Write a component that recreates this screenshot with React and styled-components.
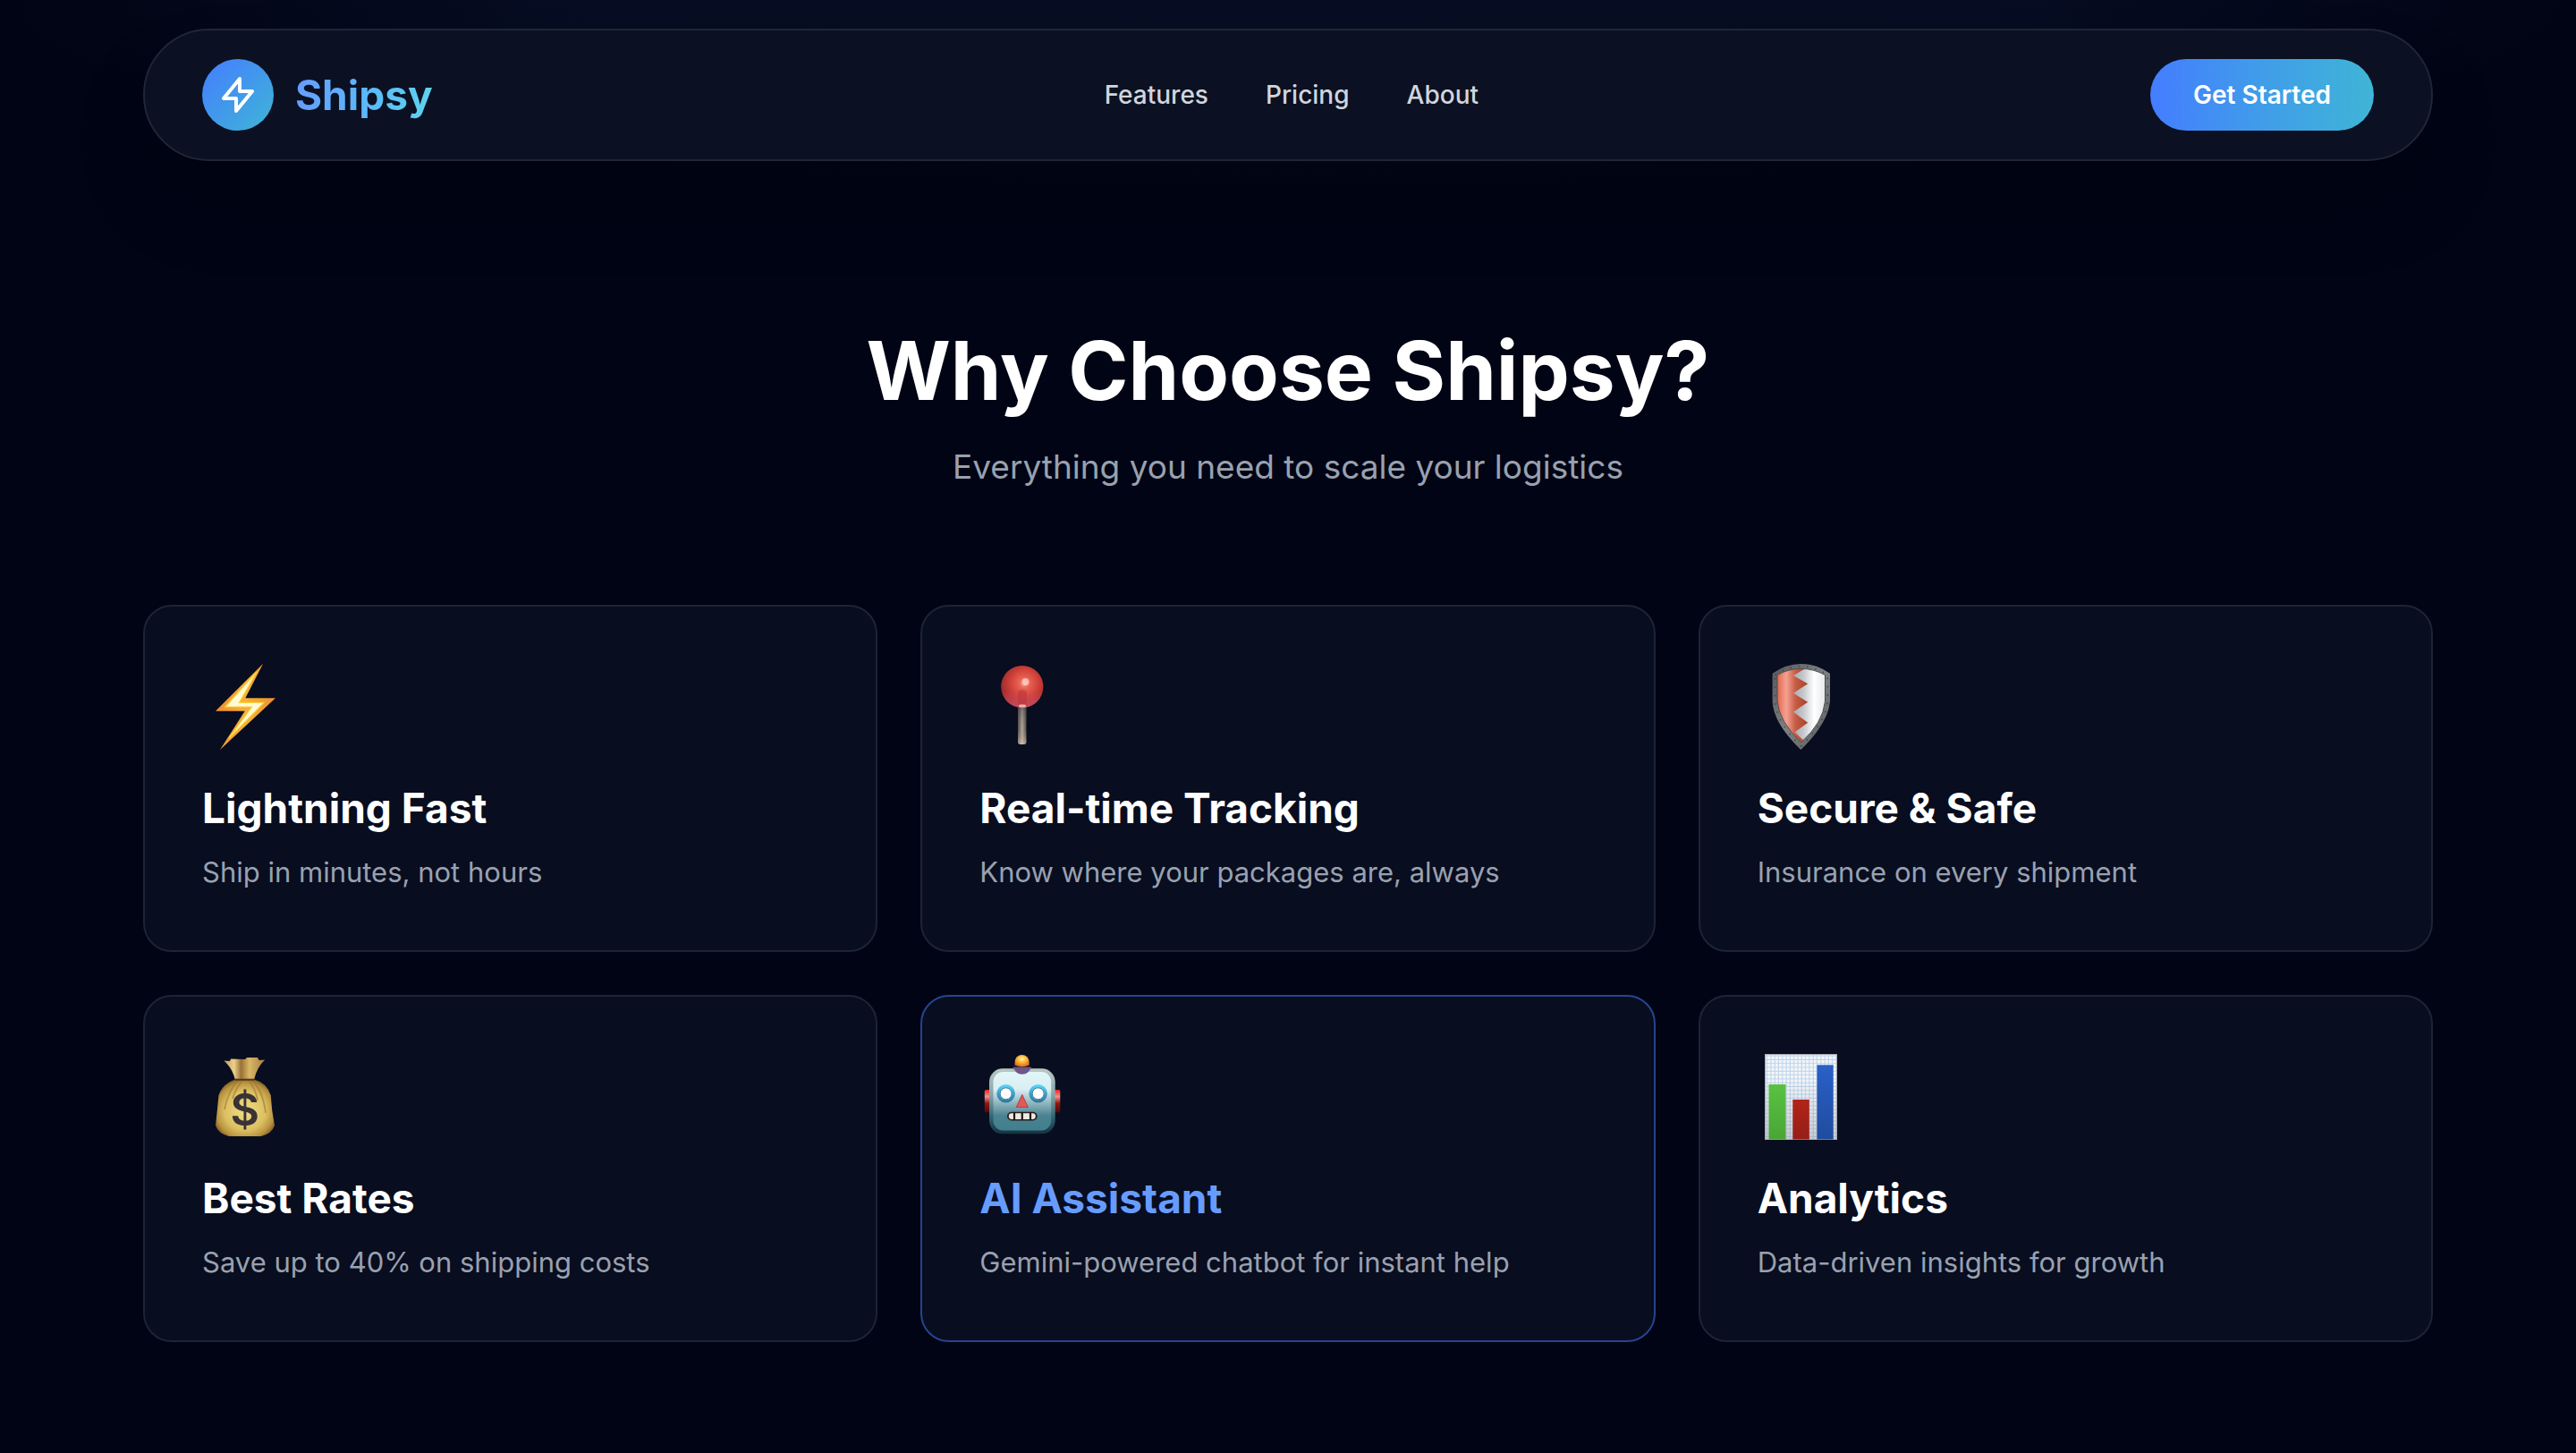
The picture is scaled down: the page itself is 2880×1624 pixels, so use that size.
import React from 'react';
import styled, { createGlobalStyle } from 'styled-components';

const GlobalStyle = createGlobalStyle`
  *, *::before, *::after { box-sizing: border-box; }
  body {
    margin: 0;
    background: #010414;
    color: #ffffff;
    font-family: Inter, "Liberation Sans", sans-serif;
    -webkit-font-smoothing: antialiased;
  }
  h1, h2, h3, p, ul { margin: 0; padding: 0; }
`;

const Page = styled.div`
  min-height: 100vh;
  padding: 32px 48px 124px;
  background: radial-gradient(ellipse 1420px 210px at 50% 0, #070d23 0%, #060c21 60%, #010414 100%) no-repeat #010414;
`;

const Container = styled.div`
  max-width: 2560px;
  margin: 0 auto;
`;

const NavBar = styled.header`
  display: flex;
  align-items: center;
  justify-content: space-between;
  padding: 32px 64px;
  border: 2px solid #1e2637;
  border-radius: 74px;
  background: #0b1122;
  box-shadow: 0 50px 100px -24px rgba(0, 0, 0, 0.25);
`;

const Brand = styled.a`
  display: flex;
  align-items: center;
  gap: 24px;
  text-decoration: none;
`;

const BrandMark = styled.span`
  display: flex;
  align-items: center;
  justify-content: center;
  width: 80px;
  height: 80px;
  border-radius: 50%;
  background: linear-gradient(135deg, #447dff, #3fb5d6);
`;

const BrandName = styled.span`
  font-size: 46px;
  line-height: 64px;
  font-weight: 700;
  color: transparent;
  background: linear-gradient(90deg, #679cff, #5bb8fa 50%, #5fd3ee);
  background-clip: text;
  -webkit-background-clip: text;
`;

const NavLinks = styled.nav`
  display: flex;
  gap: 64px;
`;

const NavLink = styled.a`
  font-size: 28px;
  line-height: 40px;
  font-weight: 500;
  color: #d1d5dc;
  text-decoration: none;
`;

const CtaButton = styled.button`
  padding: 20px 48px;
  border: 0;
  border-radius: 40px;
  background: linear-gradient(90deg, #447dff, #409de9 50%, #3fb5d6);
  color: #ffffff;
  font: 600 28px/40px Inter, "Liberation Sans", sans-serif;
  cursor: pointer;
`;

const SectionHead = styled.div`
  display: flex;
  flex-direction: column;
  align-items: center;
  gap: 32px;
  padding: 186px 0 126px;
  text-align: center;
`;

const Heading = styled.h2`
  font-size: 91px;
  line-height: 96px;
  font-weight: 700;
`;

const Subheading = styled.p`
  font-size: 37px;
  line-height: 56px;
  color: #99a1af;
`;

const CardGrid = styled.div`
  display: grid;
  grid-template-columns: repeat(3, minmax(0, 1fr));
  gap: 48px;
`;

const Card = styled.article`
  padding: 64px 64px 63px;
  border: 2px solid ${(p) => (p.$accent ? '#26458f' : '#1c2435')};
  border-radius: 32px;
  background: #080d1f;
`;

const Pictogram = styled.svg`
  display: block;
  width: 96px;
  height: 96px;
  margin-bottom: 33px;
`;

const CardTitle = styled.h3`
  margin-bottom: 16px;
  font-size: 46px;
  line-height: 64px;
  font-weight: 700;
  color: ${(p) => (p.$accent ? '#679cff' : '#ffffff')};
`;

const CardText = styled.p`
  font-size: 31px;
  line-height: 48px;
  color: #99a1af;
`;

const Bolt = () => (
  <Pictogram viewBox="0 0 96 96" aria-hidden="true">
    <defs>
      <linearGradient id="bolt" x1="0" y1="0" x2="1" y2="0">
        <stop offset="0" stopColor="#ee8f2f" />
        <stop offset=".5" stopColor="#f5b03a" />
        <stop offset="1" stopColor="#ee8f2f" />
      </linearGradient>
    </defs>
    <path d="M68 0 48.300 38.300H82L20 96 47.700 52.700H15Z" fill="url(#bolt)" />
    <path d="M61 9 41.300 43.300H69L30 83 55.700 48H26Z" fill="#fffbd6" stroke="#fbd63f" strokeWidth="1.200" />
  </Pictogram>
);

const Pin = () => (
  <Pictogram viewBox="0 0 96 96" aria-hidden="true">
    <defs>
      <radialGradient id="pinBall" cx=".55" cy=".42" r=".6">
        <stop offset="0" stopColor="#f9a596" />
        <stop offset=".2" stopColor="#ea6453" />
        <stop offset=".55" stopColor="#d0413a" />
        <stop offset="1" stopColor="#962629" />
      </radialGradient>
      <linearGradient id="pinLow" x1="0" y1="0" x2="0" y2="1">
        <stop offset=".6" stopColor="#e0566a" stopOpacity="0" />
        <stop offset="1" stopColor="#d9627c" stopOpacity=".7" />
      </linearGradient>
      <linearGradient id="pinRod" x1="0" y1="0" x2="1" y2="0">
        <stop offset="0" stopColor="#4b4643" />
        <stop offset=".5" stopColor="#b5aba0" />
        <stop offset="1" stopColor="#4b4643" />
      </linearGradient>
      <linearGradient id="pinRodLow" x1="0" y1="0" x2="0" y2="1">
        <stop offset="0" stopColor="#2c2c33" stopOpacity=".5" />
        <stop offset=".6" stopColor="#8a7c6e" stopOpacity=".1" />
        <stop offset="1" stopColor="#e4cdb4" stopOpacity=".6" />
      </linearGradient>
    </defs>
    <rect x="43" y="46" width="9.500" height="44" rx="3" fill="url(#pinRod)" />
    <rect x="43" y="46" width="9.500" height="44" rx="3" fill="url(#pinRodLow)" />
    <circle cx="47.800" cy="25.500" r="23.600" fill="url(#pinBall)" />
    <circle cx="47.800" cy="25.500" r="23.600" fill="url(#pinLow)" />
    <path d="M43 31q5-4 10 0v15H43Z" fill="#b8343a" opacity=".55" />
    <rect x="44" y="45.500" width="8" height="3" rx="1.500" fill="#f5b3b0" />
    <circle cx="51.500" cy="20" r="4" fill="#ffd9d0" opacity=".7" />
  </Pictogram>
);

const Shield = () => (
  <Pictogram viewBox="0 0 96 96" aria-hidden="true">
    <defs>
      <linearGradient id="rim" x1="0" y1="0" x2="1" y2="1">
        <stop offset="0" stopColor="#55595b" />
        <stop offset=".5" stopColor="#7d8182" />
        <stop offset="1" stopColor="#55595b" />
      </linearGradient>
      <linearGradient id="silver" gradientUnits="userSpaceOnUse" x1="40" y1="0" x2="76" y2="0">
        <stop offset="0" stopColor="#a9acb1" />
        <stop offset=".3" stopColor="#c3c6ca" />
        <stop offset=".65" stopColor="#ffffff" />
        <stop offset="1" stopColor="#e3e6ec" />
      </linearGradient>
      <linearGradient id="red" gradientUnits="userSpaceOnUse" x1="22" y1="0" x2="56" y2="0">
        <stop offset="0" stopColor="#e4684e" />
        <stop offset=".3" stopColor="#f4a192" />
        <stop offset=".6" stopColor="#c65c45" />
        <stop offset="1" stopColor="#a5432c" />
      </linearGradient>
      <clipPath id="face">
        <path d="M22 12.500Q34 5.500 48.500 5.300 63 5.500 75.500 12.500V42Q73 66 48.500 88 24 64 22 42Z" />
      </clipPath>
    </defs>
    <path d="M16.600 10.700Q32 0 48.500 0 66 0 81 10.700V42Q79 66 48.300 96 17.500 66 16.600 42Z" fill="url(#rim)" />
    <g clipPath="url(#face)">
      <rect x="16" width="70" height="96" fill="url(#silver)" />
      <path d="M16 0H58L52 6 40 13 56.200 22.300 40 32.700 56.200 42.700 40 53.700 56.200 65.700 41.700 76.300 51 85.300V96H16Z" fill="url(#red)" />
    </g>
    <path d="M22 12.500Q34 5.500 48.500 5.300 63 5.500 75.500 12.500V42Q73 66 48.500 88 24 64 22 42Z" fill="none" stroke="#4c4a4b" strokeWidth="1" />
    <path d="M19.500 12.500Q34 3 48.500 2.800 64 3 78.300 12.500V42Q76 65 48.400 92 21 65 19.500 42Z" fill="none" stroke="#3b3f41" strokeWidth="1.400" strokeDasharray="1.400 8" />
  </Pictogram>
);

const MoneyBag = () => (
  <Pictogram viewBox="0 0 96 96" aria-hidden="true">
    <defs>
      <radialGradient id="bag" cx=".5" cy=".55" r=".58">
        <stop offset="0" stopColor="#f2de85" />
        <stop offset=".6" stopColor="#dcc062" />
        <stop offset=".85" stopColor="#b8923f" />
        <stop offset="1" stopColor="#7c5a26" />
      </radialGradient>
      <linearGradient id="bagTop" x1="0" y1="0" x2="1" y2="0">
        <stop offset="0" stopColor="#c09a5c" />
        <stop offset=".25" stopColor="#ecd08a" />
        <stop offset=".42" stopColor="#9b7136" />
        <stop offset=".62" stopColor="#d9b767" />
        <stop offset="1" stopColor="#a67c42" />
      </linearGradient>
    </defs>
    <path d="M24.300 7.500 31 8 32 5.500 48 6 50 4H62L63.500 7 70.200 6.500Q61 15 58 29H37Q34 16 24.300 7.500Z" fill="url(#bagTop)" />
    <path d="M37 28.500H58Q72 32 76.700 46 77.500 62 81 80 78 89 66 92H30Q18 89 15 80 17 62 18.500 46 23 33 37 28.500Z" fill="url(#bag)" />
    <path d="M39 31Q29 42 25 62M44 31Q37 40 34 50M53 31Q60 40 62 52M57 31Q68 42 71 66" fill="none" stroke="#a37a33" strokeWidth="1.800" opacity=".65" />
    <path d="M36.500 28.700H58.500" stroke="#4f351d" strokeWidth="2" />
    <text x="47.800" y="80" textAnchor="middle" fontFamily="Inter, sans-serif" fontSize="50" fontWeight="600" fill="#3a3336">$</text>
  </Pictogram>
);

const Robot = () => (
  <Pictogram viewBox="0 0 96 96" aria-hidden="true">
    <defs>
      <linearGradient id="shell" x1="0" y1="0" x2="0" y2="1">
        <stop offset="0" stopColor="#b9c8c4" />
        <stop offset=".4" stopColor="#86a5a9" />
        <stop offset=".75" stopColor="#2f6270" />
        <stop offset="1" stopColor="#15333f" />
      </linearGradient>
      <linearGradient id="plate" x1="0" y1="0" x2="0" y2="1">
        <stop offset="0" stopColor="#e2f6f8" />
        <stop offset=".3" stopColor="#d9eef2" />
        <stop offset=".75" stopColor="#4a8291" />
        <stop offset="1" stopColor="#417f8e" />
      </linearGradient>
      <linearGradient id="ear" x1="0" y1="0" x2="0" y2="1">
        <stop offset="0" stopColor="#e8241a" />
        <stop offset=".3" stopColor="#f0938c" />
        <stop offset=".6" stopColor="#8f1712" />
        <stop offset="1" stopColor="#4f0b0b" />
      </linearGradient>
      <radialGradient id="lamp" cx=".5" cy=".35" r=".6">
        <stop offset="0" stopColor="#fff2a0" />
        <stop offset=".5" stopColor="#fbb83a" />
        <stop offset="1" stopColor="#e3731d" />
      </radialGradient>
      <linearGradient id="ring" x1="0" y1="0" x2="0" y2="1">
        <stop offset="0" stopColor="#57d3f5" />
        <stop offset=".5" stopColor="#3aa0c8" />
        <stop offset="1" stopColor="#2e7b9c" />
      </linearGradient>
    </defs>
    <rect x="5.800" y="40" width="8" height="25.300" rx="1.500" fill="url(#ear)" />
    <rect x="82.300" y="40" width="8" height="25.300" rx="1.500" fill="url(#ear)" />
    <rect x="11" y="16.300" width="73.700" height="73" rx="15" fill="url(#shell)" />
    <rect x="15.500" y="20" width="64.700" height="65.500" rx="11" fill="url(#plate)" />
    <path d="M37.400 14.500H58.200Q55 22.700 47.800 22.700 40.500 22.700 37.400 14.500Z" fill="#6f5689" />
    <path d="M39.600 9a8 8 0 0 1 16 0V12.500Q47.600 16 39.600 12.500Z" fill="url(#lamp)" />
    <circle cx="29.600" cy="44.300" r="8.600" fill="#f4fbfd" stroke="url(#ring)" strokeWidth="3.400" />
    <circle cx="65.600" cy="44.300" r="8.600" fill="#f4fbfd" stroke="url(#ring)" strokeWidth="3.400" />
    <circle cx="29.600" cy="44.300" r="6.500" fill="#ffffff" stroke="#2c6f93" strokeWidth="1" />
    <circle cx="65.600" cy="44.300" r="6.500" fill="#ffffff" stroke="#2c6f93" strokeWidth="1" />
    <path d="M47.800 45.500 54.300 59.500H41.200Z" fill="#df5a58" stroke="#b63f40" strokeWidth="1" strokeLinejoin="round" />
    <rect x="31" y="64.700" width="33.700" height="9.800" rx="4.900" fill="#2a211f" />
    <rect x="32.800" y="66.200" width="30" height="6.800" rx="3.400" fill="#eeeae2" />
    <path d="M39 65.500V74M47.800 65.500V74M57 65.500V74" stroke="#1f1715" strokeWidth="2.200" />
  </Pictogram>
);

const Chart = () => (
  <Pictogram viewBox="0 0 96 96" aria-hidden="true">
    <defs>
      <pattern id="grid" width="4.300" height="4.300" patternUnits="userSpaceOnUse">
        <path d="M0 2H4.300M2 0V4.300" stroke="#bcd4ea" strokeWidth="1.100" />
      </pattern>
      <linearGradient id="green" x1="0" y1="0" x2="0" y2="1">
        <stop offset="0" stopColor="#59c241" />
        <stop offset="1" stopColor="#4aa537" />
      </linearGradient>
      <linearGradient id="crimson" x1="0" y1="0" x2="0" y2="1">
        <stop offset="0" stopColor="#b2241a" />
        <stop offset="1" stopColor="#951f17" />
      </linearGradient>
      <linearGradient id="blue" x1="0" y1="0" x2="0" y2="1">
        <stop offset="0" stopColor="#2a60c8" />
        <stop offset="1" stopColor="#1f4c9e" />
      </linearGradient>
      <linearGradient id="sheetShade" x1="0" y1="0" x2="0" y2="1">
        <stop offset=".3" stopColor="#8b8b98" stopOpacity="0" />
        <stop offset="1" stopColor="#8b8b98" stopOpacity=".4" />
      </linearGradient>
    </defs>
    <rect x="8" y="0" width="81" height="96" fill="#f6f7f9" />
    <rect x="8" y="0" width="81" height="96" fill="url(#grid)" />
    <rect x="8" y="0" width="81" height="96" fill="url(#sheetShade)" />
    <rect x="8.500" y=".5" width="80" height="95" fill="none" stroke="#a9abb3" />
    <rect x="12.500" y="34" width="19" height="61.500" fill="url(#green)" />
    <rect x="39.300" y="51" width="18.500" height="44.500" fill="url(#crimson)" />
    <rect x="66.400" y="12.300" width="18.300" height="83.200" fill="url(#blue)" />
  </Pictogram>
);

const links = ['Features', 'Pricing', 'About'];

const features = [
  { Icon: Bolt, title: 'Lightning Fast', text: 'Ship in minutes, not hours' },
  { Icon: Pin, title: 'Real-time Tracking', text: 'Know where your packages are, always' },
  { Icon: Shield, title: 'Secure & Safe', text: 'Insurance on every shipment' },
  { Icon: MoneyBag, title: 'Best Rates', text: 'Save up to 40% on shipping costs' },
  { Icon: Robot, title: 'AI Assistant', text: 'Gemini-powered chatbot for instant help', accent: true },
  { Icon: Chart, title: 'Analytics', text: 'Data-driven insights for growth' },
];

export default function App() {
  return (
    <Page>
      <GlobalStyle />
      <Container>
        <NavBar>
          <Brand href="#">
            <BrandMark>
              <svg width="48" height="48" viewBox="0 0 24 24" fill="none" stroke="#fff" strokeWidth="2" strokeLinecap="round" strokeLinejoin="round" aria-hidden="true">
                <path d="M13 10V3L4 14h7v7l9-11h-7z" />
              </svg>
            </BrandMark>
            <BrandName>Shipsy</BrandName>
          </Brand>
          <NavLinks>
            {links.map((label) => (
              <NavLink key={label} href={`#${label.toLowerCase()}`}>{label}</NavLink>
            ))}
          </NavLinks>
          <CtaButton type="button">Get Started</CtaButton>
        </NavBar>
        <main>
          <SectionHead>
            <Heading>Why Choose Shipsy?</Heading>
            <Subheading>Everything you need to scale your logistics</Subheading>
          </SectionHead>
          <CardGrid>
            {features.map(({ Icon, title, text, accent }) => (
              <Card key={title} $accent={accent}>
                <Icon />
                <CardTitle $accent={accent}>{title}</CardTitle>
                <CardText>{text}</CardText>
              </Card>
            ))}
          </CardGrid>
        </main>
      </Container>
    </Page>
  );
}
